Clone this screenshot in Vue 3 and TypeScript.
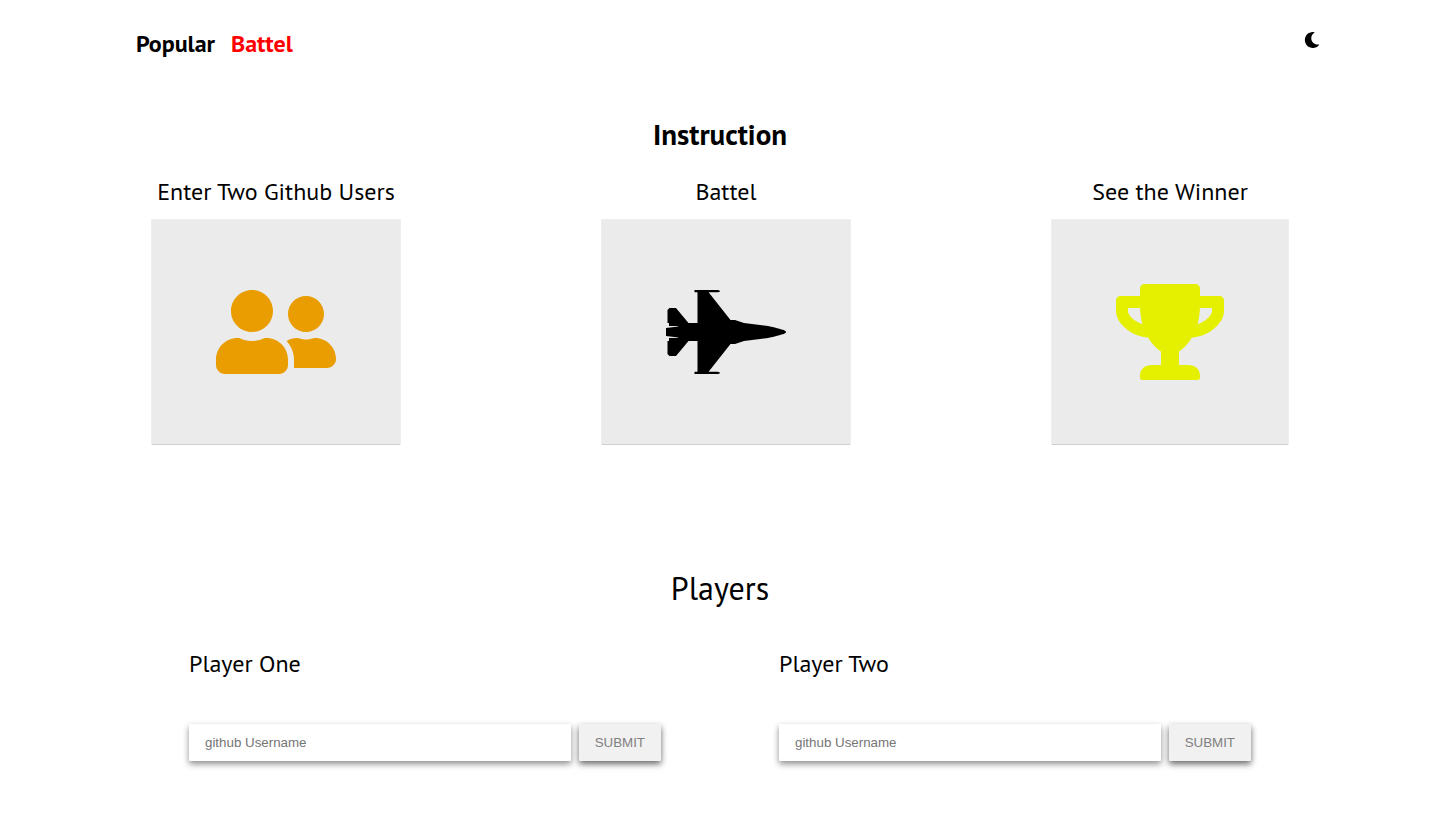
<script setup lang="ts">
import { reactive } from 'vue'

interface Step {
  title: string
  icon: string
  width: number
  path: string
}

interface Player {
  id: string
  label: string
  username: string
}

const steps: Step[] = [
  {
    title: 'Enter Two Github Users',
    icon: 'users',
    width: 640,
    path: 'M192 256c61.9 0 112-50.1 112-112S253.9 32 192 32 80 82.1 80 144s50.1 112 112 112zm76.8 32h-8.3c-20.8 10-43.9 16-68.5 16s-47.6-6-68.5-16h-8.3C51.6 288 0 339.6 0 403.2V432c0 26.5 21.5 48 48 48h288c26.5 0 48-21.5 48-48v-28.8c0-63.6-51.6-115.2-115.2-115.2zM480 256c53 0 96-43 96-96s-43-96-96-96-96 43-96 96 43 96 96 96zm48 32h-3.8c-13.9 4.8-28.6 8-44.2 8s-30.3-3.2-44.2-8H432c-20.4 0-39.2 5.9-55.7 15.4 24.4 26.3 39.7 61.2 39.7 99.8v38.4c0 2.2-.5 4.3-.6 6.4H592c26.5 0 48-21.5 48-48 0-61.9-50.1-112-112-112z',
  },
  {
    title: 'Battel',
    icon: 'jet',
    width: 640,
    path: 'M544 224l-128-16-48-16h-24L227.158 44h39.509C278.333 44 288 41.375 288 38s-9.667-6-21.333-6H152v12h16v164h-48l-66.667-80H18.667L8 138.667V208h8v16h48v2.666l-64 8v42.667l64 8V288H16v16H8v69.333L18.667 384h34.667L120 304h48v164h-16v12h114.667c11.667 0 21.333-2.625 21.333-6s-9.667-6-21.333-6h-39.509L344 320h24l48-16 128-16c96-21.333 96-26.583 96-32 0-5.417 0-10.667-96-32z',
  },
  {
    title: 'See the Winner',
    icon: 'trophy',
    width: 576,
    path: 'M552 64H448V24c0-13.3-10.7-24-24-24H152c-13.3 0-24 10.7-24 24v40H24C10.7 64 0 74.7 0 88v56c0 35.7 22.5 72.4 61.9 100.7 31.5 22.7 69.8 37.1 110 41.7C203.3 338.5 240 360 240 360v72h-48c-35.3 0-64 20.7-64 56v12c0 6.6 5.4 12 12 12h296c6.6 0 12-5.4 12-12v-12c0-35.3-28.7-56-64-56h-48v-72s36.7-21.5 68.1-73.6c40.3-4.6 78.6-19 110-41.7 39.3-28.3 61.9-65 61.9-100.7V88c0-13.3-10.7-24-24-24zM99.3 192.8C74.9 175.2 64 155.6 64 144v-16h64.2c1 32.6 5.8 61.2 12.8 86.2-15.1-5.2-29.2-12.4-41.7-21.4zM512 144c0 16.1-17.7 36.1-35.3 48.8-12.5 9-26.7 16.2-41.8 21.4 7-25 11.8-53.6 12.8-86.2H512v16z',
  },
]

const players = reactive<Player[]>([
  { id: 'player-one', label: 'Player One', username: '' },
  { id: 'player-two', label: 'Player Two', username: '' },
])
</script>

<template>
  <div class="app">
    <header class="header">
      <nav class="nav">
        <a class="link" href="#popular">Popular</a>
        <a class="link active" href="#battel">Battel</a>
      </nav>
      <button class="theme" type="button" aria-label="Toggle dark mode">
        <svg class="moon" viewBox="0 0 512 512" aria-hidden="true">
          <path d="M283.211 512c78.962 0 151.079-35.925 198.857-94.792 7.068-8.708-.639-21.43-11.562-19.35-124.203 23.654-238.262-71.576-238.262-196.954 0-72.222 38.662-138.635 101.498-174.394 9.686-5.512 7.25-20.197-3.756-22.23A258.156 258.156 0 0 0 283.211 0c-141.309 0-256 114.511-256 256 0 141.309 114.511 256 256 256z" />
        </svg>
      </button>
    </header>

    <main>
      <section class="instruction">
        <h1 class="heading">Instruction</h1>
        <ol class="steps">
          <li v-for="step in steps" :key="step.icon" class="step">
            <h2 class="label">{{ step.title }}</h2>
            <div class="card">
              <svg class="icon" :class="step.icon" :viewBox="`0 0 ${step.width} 512`" aria-hidden="true">
                <path :d="step.path" />
              </svg>
            </div>
          </li>
        </ol>
      </section>

      <section class="players">
        <h2 class="players-title">Players</h2>
        <div class="forms">
          <form v-for="player in players" :key="player.id" class="player" @submit.prevent>
            <label class="label" :for="player.id">{{ player.label }}</label>
            <div class="row">
              <input :id="player.id" v-model="player.username" class="field" type="text" placeholder="github Username" autocomplete="off" />
              <button class="submit" type="submit" :disabled="!player.username">SUBMIT</button>
            </div>
          </form>
        </div>
      </section>
    </main>
  </div>
</template>

<style>
body {
  margin: 0;
  background: #fff;
}
</style>

<style scoped>
.app {
  box-sizing: border-box;
  max-width: 1200px;
  margin: 0 auto;
  color: #000;
  font-family: "PT Sans", Lato, "Open Sans", sans-serif;
}

.header {
  display: flex;
  justify-content: space-between;
  align-items: flex-start;
  padding-top: 28px;
}

.nav {
  display: flex;
  gap: 16px;
  padding-left: 16px;
}

.link {
  color: #000;
  font-size: 24px;
  line-height: 32px;
  font-weight: 700;
  text-decoration: none;
}

.link.active {
  color: #f00;
}

.theme {
  margin: 4px 0 0;
  padding: 0;
  border: 0;
  background: none;
  cursor: pointer;
}

.moon {
  display: block;
  width: 16px;
  height: 16px;
}

.instruction {
  padding: 56px 32px 0;
}

.heading {
  margin: 0;
  font-size: 29px;
  line-height: 36px;
  font-weight: 700;
  text-align: center;
}

.steps {
  display: flex;
  justify-content: space-between;
  margin: 24px 0 0;
  padding: 0;
  list-style: none;
}

.label {
  display: block;
  margin: 0;
  font-size: 24px;
  line-height: 32px;
  font-weight: 400;
}

.step .label {
  text-align: center;
}

.card {
  margin-top: 12px;
  padding: 64px;
  background: #ebebeb;
  box-shadow: 0 1px 0 rgba(0, 0, 0, 0.13), 0 0 0 1px #eeeeee;
}

.icon {
  display: block;
  height: 96px;
  fill: #000;
}

.users {
  fill: #e99d00;
}

.trophy {
  fill: #e4f000;
}

.players {
  padding: 124px 10px 48px;
}

.players-title {
  margin: 0;
  font-size: 32px;
  line-height: 40px;
  font-weight: 400;
  text-align: center;
}

.forms {
  display: flex;
  justify-content: space-around;
  margin-top: 40px;
}

.player {
  width: 40%;
}

.row {
  display: flex;
  gap: 8px;
  margin-top: 44px;
}

.field,
.submit {
  box-sizing: border-box;
  height: 37px;
  padding: 0 16px;
  border: 0;
  border-radius: 1px;
  font-family: "Liberation Sans", Arial, sans-serif;
}

.field {
  flex: 1;
  min-width: 0;
  background: #fff;
  box-shadow: 0 3px 6px rgba(0, 0, 0, 0.45);
}

.field::placeholder {
  color: #757575;
}

.submit {
  background: #f1f1f1;
  color: #808080;
  box-shadow: 0 3px 6px rgba(0, 0, 0, 0.6);
}
</style>
